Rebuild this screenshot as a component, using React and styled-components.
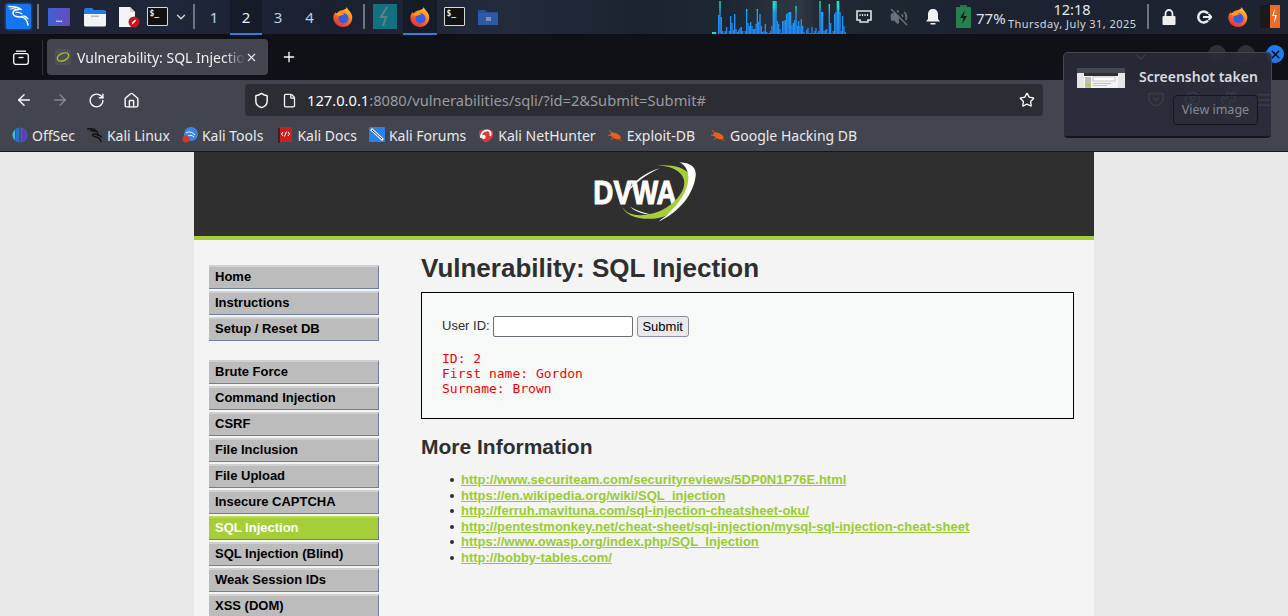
import React from 'react';
import styled, { createGlobalStyle } from 'styled-components';
import {
  ArrowLeft,
  ArrowRight,
  RotateCw,
  House,
  Shield,
  File,
  Star,
  Plus,
  X,
  ChevronDown,
  VolumeOff,
  CircleUser,
  Puzzle,
  Menu,
} from 'lucide-react';

const GlobalStyle = createGlobalStyle`
  html, body {
    margin: 0;
    padding: 0;
    background: #e8e8e8;
  }
`;

const Screen = styled.div`
  position: relative;
  width: 1288px;
  height: 616px;
  overflow: hidden;
  display: flex;
  flex-direction: column;
  font-family: 'Noto Sans', sans-serif;
`;

/* desktop panel */
const Panel = styled.div`
  flex: 0 0 35px;
  display: flex;
  align-items: stretch;
  background: linear-gradient(
    90deg,
    #1d2232 0,
    #20263a 170px,
    #1a2030 330px,
    #232a3b 500px,
    #1c2330 640px,
    #1d2734 730px,
    #2f3742 800px,
    #1f2833 820px,
    #1c2230 1000px,
    #1e2330 1288px
  );
  box-shadow: inset 0 -1px 0 #0e1016;
  color: #dfe3ea;
`;

const Slot = styled.div`
  width: ${p => p.$w}px;
  display: flex;
  align-items: center;
  justify-content: center;
  flex: none;
  margin-left: ${p => p.$ml || 0}px;
  box-shadow: ${p => (p.$active ? 'inset 0 -2px 0 #2f7fe0' : 'none')};
  background: ${p => (p.$active ? '#161b28' : 'transparent')};
  padding-bottom: 2px;
  box-sizing: border-box;
`;

const Divider = styled.div`
  width: 2px;
  height: 25px;
  align-self: center;
  margin: 0 0 2px ${p => p.$ml || 0}px;
  background: #6f7480;
  flex: none;
`;

const Workspace = styled(Slot)`
  font-size: 15px;
  color: ${p => (p.$active ? '#e8ecf2' : '#b8d0ec')};
`;

const Terminal = styled.div`
  width: 21px;
  height: 19px;
  box-sizing: border-box;
  border: 1px solid #d8d8d8;
  border-radius: 1px;
  background: #111;
  color: #eee;
  font: bold 8px/11px 'DejaVu Sans Mono', monospace;
  padding-left: 2px;
`;

const LauncherTile = styled.div`
  width: 22px;
  height: 18px;
  border-radius: 1px;
  background: linear-gradient(100deg, #3d62d8, #6a4bb8);
  color: #fff;
  font: bold 8px/22px 'Noto Sans', sans-serif;
  text-align: center;
`;

const Spectrum = styled.svg`
  display: block;
  flex: none;
  margin-left: 201px;
`;

const StatusArea = styled.div`
  margin-left: auto;
  padding-right: 8px;
  display: flex;
  align-items: center;
`;

const Percent = styled.span`
  font-size: 15px;
  color: #dfe3ea;
  width: 32px;
  margin-left: 5px;
  flex: none;
  white-space: nowrap;
`;

const Clock = styled.div`
  width: 128px;
  flex: none;
  margin-bottom: 4px;
  text-align: center;
  line-height: 1;
  white-space: nowrap;
`;

const ClockTime = styled.div`
  font-size: 14.5px;
  line-height: 17px;
  color: #e6e8ec;
`;

const ClockDate = styled.div`
  font-size: 11px;
  line-height: 12px;
  letter-spacing: 0.45px;
  color: #d4d7dd;
`;

/* browser chrome */
const TabStrip = styled.div`
  flex: 0 0 45px;
  box-sizing: border-box;
  padding: 0 4px 1px 0;
  display: flex;
  align-items: center;
  background: #0f1116;
  color: #fbfbfe;
`;

const ViewButton = styled.div`
  width: 42px;
  display: flex;
  justify-content: center;
  flex: none;
`;

const TabDivider = styled.div`
  width: 1px;
  height: 35px;
  background: #33353c;
  flex: none;
`;

const Tab = styled.div`
  width: 221px;
  height: 36px;
  margin-left: 4px;
  border-radius: 4px;
  background: #42454d;
  display: flex;
  align-items: center;
  padding: 0 10px 0 8px;
  box-sizing: border-box;
  flex: none;
`;

const TabTitle = styled.span`
  flex: 1;
  margin-left: 6px;
  font-size: 14px;
  white-space: nowrap;
  overflow: hidden;
  color: #f0f0f3;
  -webkit-mask-image: linear-gradient(90deg, #000 88%, transparent);
  mask-image: linear-gradient(90deg, #000 88%, transparent);
`;

const NewTab = styled.div`
  margin-left: 13px;
  display: flex;
`;

const TabListButton = styled.div`
  margin-left: auto;
  width: 18px;
  display: flex;
  justify-content: center;
  color: #fbfbfe;
`;

const WindowButtons = styled.div`
  margin-left: 58px;
  display: flex;
  gap: 11px;
  margin-top: -6px;
`;

const WindowButton = styled.div`
  width: 18px;
  height: 18px;
  border-radius: 50%;
  background: ${p => (p.$close ? '#1f7bf2' : '#2f3138')};
  color: #0b0d12;
  display: flex;
  align-items: center;
  justify-content: center;
`;

const Toolbar = styled.div`
  flex: 0 0 40px;
  display: flex;
  align-items: center;
  background: #42454d;
  color: #fbfbfe;
`;

const NavButton = styled.div`
  width: ${p => p.$w || 36}px;
  display: flex;
  justify-content: center;
  flex: none;
  color: ${p => (p.$off ? '#85878d' : '#fbfbfe')};
`;

const UrlBar = styled.div`
  width: 798px;
  height: 32px;
  margin-left: 103px;
  background: #2b2d33;
  border-radius: 4px;
  display: flex;
  align-items: center;
  padding: 0 8px;
  box-sizing: border-box;
  flex: none;
`;

const PageIcon = styled(File)`
  margin-left: 12px;
  flex: none;
`;

const Url = styled.span`
  margin-left: 10px;
  font-size: 14.7px;
  color: #fbfbfe;
  flex: 1;
  white-space: nowrap;
`;

const UrlRest = styled.span`
  color: #9a9ba1;
`;

const ExtraButtons = styled.div`
  margin-left: 95px;
  display: flex;
`;

const Bookmarks = styled.div`
  flex: 0 0 32px;
  display: flex;
  align-items: center;
  background: #42454d;
  padding: 0 0 1px 12px;
  box-sizing: border-box;
  border-bottom: 1px solid #17181c;
  gap: 12px;
  color: #e9e9ec;
  font-size: 14px;
`;

const Bookmark = styled.div`
  display: flex;
  align-items: center;
  gap: 4px;
  white-space: nowrap;
  margin-right: ${p => p.$trail || 0}px;
`;

/* toast over the browser */
const Toast = styled.div`
  position: absolute;
  left: 1063px;
  top: 52px;
  width: 209px;
  height: 86px;
  box-sizing: border-box;
  border: 1px solid #434752;
  border-bottom: 2px solid #14161c;
  border-radius: 5px;
  background: rgba(40, 43, 55, 0.92);
  color: #d7dae0;
`;

const ToastThumb = styled.svg`
  position: absolute;
  left: 13px;
  top: 12px;
`;

const ToastTitle = styled.div`
  position: absolute;
  left: 75px;
  top: 14px;
  font-size: 14px;
  font-weight: 600;
  white-space: nowrap;
`;

const ToastButton = styled.div`
  position: absolute;
  left: 109px;
  top: 42px;
  width: 85px;
  height: 30px;
  box-sizing: border-box;
  border: 1px solid #15171d;
  border-radius: 4px;
  background: rgba(42, 45, 57, 0.35);
  color: #868a93;
  font-size: 12.5px;
  line-height: 28px;
  text-align: center;
`;

/* the DVWA page */
const Viewport = styled.div`
  flex: 1;
  min-height: 0;
  background: #e8e8e8;
  font-family: 'Liberation Sans', Arial, sans-serif;
`;

const Container = styled.div`
  width: 900px;
  margin-left: 194px;
  height: 100%;
  background: #f4f4f4;
  color: #2f2f2f;
`;

const Header = styled.div`
  height: 84px;
  background: #2f2f2f;
  border-bottom: 4px solid #a6ce39;
  display: flex;
  justify-content: center;
  align-items: flex-start;
`;

const Logo = styled.svg`
  display: block;
  margin: 8px 0 0 2px;
`;

const Body = styled.div`
  display: flex;
  padding: 25px 20px 0 15px;
`;

const Sidebar = styled.div`
  width: 170px;
  flex: none;
`;

const MenuGroup = styled.div`
  display: flex;
  flex-direction: column;
  gap: 2px;
  margin-bottom: 19px;
`;

const MenuItem = styled.div`
  height: 24px;
  box-sizing: border-box;
  padding-left: 6px;
  font-size: 13px;
  font-weight: bold;
  line-height: 20px;
  color: ${p => (p.$active ? '#fff' : '#000')};
  background: ${p => (p.$active ? '#a6ce39' : '#bcbcbc')};
  border-top: 2px solid ${p => (p.$active ? '#bcdc55' : '#d0d0d0')};
  border-right: 1px solid #6f7f99;
  border-bottom: 1px solid #6f7f99;
`;

const Main = styled.div`
  flex: 1;
  margin-left: 42px;
`;

const Title = styled.h1`
  margin: -14px 0 6px;
  font-size: 26px;
  line-height: 35px;
  font-weight: bold;
  color: #2f2f2f;
`;

const VulnBox = styled.div`
  height: 127px;
  box-sizing: border-box;
  border: 1px solid #000;
  background: #f8f9f9;
  padding: 23px 20px 0;
`;

const FormRow = styled.div`
  display: flex;
  align-items: center;
  font-size: 13px;
  color: #2f2f2f;
`;

const FieldLabel = styled.span`
  margin-bottom: 2px;
`;

const TextInput = styled.div`
  width: 140px;
  height: 21px;
  box-sizing: border-box;
  margin-left: 3px;
  background: #fff;
  border: 1px solid #6d6d76;
  border-radius: 2px;
`;

const SubmitButton = styled.div`
  width: 52px;
  height: 21px;
  box-sizing: border-box;
  margin-left: 4px;
  background: #e9e9ed;
  border: 1px solid #8f8f9d;
  border-radius: 3px;
  color: #000;
  font-size: 13px;
  line-height: 19px;
  text-align: center;
`;

const Result = styled.pre`
  margin: 14px 0 0;
  color: #f00;
  font: 13px/15px 'DejaVu Sans Mono', monospace;
`;

const SubTitle = styled.h2`
  margin: 15px 0 12px;
  font-size: 21px;
  line-height: 26px;
  font-weight: bold;
  color: #2f2f2f;
`;

const Links = styled.ul`
  margin: 0;
  padding-left: 40px;
  font-size: 13px;
  line-height: 15.6px;
  list-style: none;
`;

const LinkItem = styled.li`
  position: relative;
  color: #2f2f2f;

  &::before {
    content: '';
    position: absolute;
    left: -11px;
    top: 6px;
    width: 4px;
    height: 4px;
    border-radius: 50%;
    background: #2f2f2f;
  }
`;

const MoreLink = styled.a`
  color: #9c3;
  font-weight: bold;
  text-decoration: underline;
`;

const FirefoxIcon = ({ size = 22 }) => (
  <svg width={size} height={size} viewBox="0 0 24 24">
    <defs>
      <linearGradient id="foxOuter" x1="0.8" y1="0" x2="0.2" y2="1">
        <stop offset="0" stopColor="#ffd23a" />
        <stop offset="0.45" stopColor="#ff7a1f" />
        <stop offset="1" stopColor="#e8263c" />
      </linearGradient>
    </defs>
    <path
      d="M16 1c1 3 5 5 6 10 1 7-4 12-10 12S1 18 1.500 11.500C2 9 3 7.500 4 6.500c0 1 .4 1.800 1 2.300C6 6 9 4.500 11.500 4.500 13.500 4 16 3 16 1z"
      fill="url(#foxOuter)"
    />
    <circle cx="12.500" cy="13.500" r="5.500" fill="#3a5de0" />
    <path d="M3.500 9c3-2.500 8-2.500 10 .5-2 0-3.500 .5-4.500 1.500-2-.5-4-1-5.500-2z" fill="#ff9a1f" />
  </svg>
);

const KaliDragon = ({ size = 16, color = '#fff', width = 1.6 }) => (
  <svg width={size} height={size} viewBox="0 0 24 24" fill="none" stroke={color} strokeWidth={width} strokeLinecap="round" strokeLinejoin="round">
    <path d="M1 3c5-1 10 0 13 3 2 2 3 4 2 6-3-2-7-2-8 0 0 2 3 2 6 3 4 1 6 3 7 7" />
    <path d="M16 12c2 0 4 1 6 3M5 5c3 0 5 1 7 2" />
  </svg>
);

const KaliTile = () => (
  <svg width="29" height="29" viewBox="-2 -2 29 29">
    <rect x="-1.500" y="-1.500" width="28" height="28" rx="4" fill="#1f7ef5" opacity="0.3" />
    <rect x="0" y="0" width="25" height="25" rx="2" fill="#1674f0" />
    <path
      d="M3 2.500C8 2.500 12 3 15.500 5.500C11 5 7 6 7 9C7 12 11 13 15 13C19 13 21 16 22 21"
      fill="none"
      stroke="#fff"
      strokeWidth="1.500"
      strokeLinecap="round"
      strokeLinejoin="round"
    />
    <path d="M4 5C7 4.500 10 5 12 6M15 13C17 11 20 12 22 15M10 8.500c2-.5 4 0 6 1.500" fill="none" stroke="#fff" strokeWidth="1.100" strokeLinecap="round" />
  </svg>
);

const FolderTile = () => (
  <svg width="22" height="20" viewBox="0 0 22 20">
    <path d="M0 3a2 2 0 0 1 2-2h6l2 2h10a2 2 0 0 1 2 2v2H0z" fill="#2a78e4" />
    <path d="M0 7h22v11a1.500 1.500 0 0 1-1.500 1.500h-19A1.500 1.500 0 0 1 0 18z" fill="#f2f3f5" />
    <rect x="7" y="8.500" width="8" height="1.600" fill="#b9bcc2" />
  </svg>
);

const DocTile = () => (
  <svg width="22" height="22" viewBox="0 0 22 22">
    <path d="M1 1h11l5 5v15H1z" fill="#f4f4f4" />
    <path d="M12 1l5 5h-5z" fill="#cfcfcf" />
    <circle cx="16" cy="16" r="5.500" fill="#c8141c" />
    <path d="M13.500 18.500l1-2.500 2.500-2.500 1.200 1.200-2.500 2.500z" fill="#fff" />
  </svg>
);

const AppFolder = () => (
  <svg width="22" height="18" viewBox="0 0 22 18">
    <path d="M1 2h7l2 2h11v13H1z" fill="#234d96" />
    <rect x="1" y="5" width="20" height="12" fill="#2a5aa8" />
    <rect x="9" y="9" width="5" height="4" fill="#7f92b4" />
  </svg>
);

const PowerTile = () => (
  <svg width="24" height="25" viewBox="0 0 24 25">
    <rect width="24" height="25" fill="#12707f" />
    <path d="M14 3L8 13h5l-3 9" fill="none" stroke="#5d7f86" strokeWidth="2.200" />
  </svg>
);

// bar heights, one every 1.33px from x = 12 inside the svg
const spectrumData = [
  19, 33, 17, 3, 1, 3, 7, 0, 3, 18, 11, 4, 20, 5, 2, 4, 6, 7, 3, 0, 3, 25, 11, 8, 12, 8, 5, 5, 10, 25, 12, 20, 8, 2, 3, 10, 2, 1, 1,
  3, 8, 33, 33, 33, 13, 10, 5, 1, 13, 13, 14, 20, 21, 22, 22, 9, 11, 14, 28, 8, 13, 8, 15, 8, 2, 0, 4, 6, 1, 1, 7, 1, 3, 6, 1, 3, 33,
  22, 22, 3, 4, 5, 1, 30, 11, 1, 3, 20, 22, 33, 33, 22, 3, 18, 8, 2,
];

const SpectrumBars = () => (
  <Spectrum width="140" height="34" viewBox="0 0 140 34">
    <defs>
      <linearGradient id="specFill" gradientUnits="userSpaceOnUse" x1="0" y1="0" x2="0" y2="34">
        <stop offset="0" stopColor="#14e8c8" />
        <stop offset="0.22" stopColor="#16dcd0" />
        <stop offset="0.38" stopColor="#1c9cf0" />
        <stop offset="1" stopColor="#2284f4" />
      </linearGradient>
    </defs>
    <rect x="6" y="32" width="4" height="2" fill="#1de0c0" />
    {spectrumData.map((h, i) => (
      <rect key={i} x={12 + i * 1.333} y={34 - h} width="1.340" height={h} fill="url(#specFill)" />
    ))}
  </Spectrum>
);

const NetworkIcon = () => (
  <svg width="16" height="14" viewBox="0 0 16 14">
    <path d="M1 1h14v9h-3v2H4v-2H1z" fill="none" stroke="#e4e4e4" strokeWidth="1.600" />
    <path d="M4 4v2M6.500 4v2M9 4v2M11.500 4v2" stroke="#e4e4e4" strokeWidth="1.200" />
  </svg>
);

const BellIcon = () => (
  <svg width="14" height="16" viewBox="0 0 14 16">
    <path d="M7 0c3 0 5 2 5 5.500V10l2 2.500H0L2 10V5.500C2 2 4 0 7 0z" fill="#f0f0f0" />
    <rect x="4.500" y="14" width="5" height="1.500" fill="#f0f0f0" />
  </svg>
);

const BatteryIcon = () => (
  <svg width="15" height="23" viewBox="0 0 15 23">
    <rect x="4" y="0" width="7" height="2" fill="#27714a" />
    <rect x="0" y="2" width="15" height="21" rx="1" fill="#27814f" />
    <path d="M9 5L4 13h3.500l-1.500 6 5-8H7.500z" fill="#10161c" />
  </svg>
);

const LockIcon = () => (
  <svg width="14" height="16" viewBox="0 0 14 16">
    <path d="M3.500 7V4.500a3.500 3.500 0 0 1 7 0V7" fill="none" stroke="#eee" strokeWidth="1.800" />
    <rect x="0.500" y="7" width="13" height="9" rx="1" fill="#eee" />
  </svg>
);

const LogoutIcon = () => (
  <svg width="15" height="14" viewBox="0 0 15 14">
    <path d="M11 3.500A5.500 5.500 0 1 0 11 10.500" fill="none" stroke="#eee" strokeWidth="2.400" />
    <path d="M6 7h9M11.500 4l3 3-3 3" fill="none" stroke="#eee" strokeWidth="1.800" />
  </svg>
);

const BurpIcon = () => (
  <svg width="20" height="23" viewBox="0 0 20 23">
    <rect width="10" height="23" fill="#1a1a1a" />
    <rect x="10" width="10" height="23" fill="#f06a22" />
    <path d="M15 3l-3 8h3l-1 8 3-9h-3z" fill="#fff" />
  </svg>
);

const ShelfIcon = () => (
  <svg width="16" height="15" viewBox="0 0 16 15" fill="none" stroke="#fbfbfe" strokeWidth="1.300">
    <path d="M3 1.200h10" />
    <rect x="0.700" y="3.700" width="14.600" height="10.600" rx="2" />
    <path d="M5.500 7.500h5" />
  </svg>
);

const PocketIcon = () => (
  <svg width="16" height="16" viewBox="0 0 16 16" fill="none" stroke="#fbfbfe" strokeWidth="1.300">
    <path d="M1 2.500h14v5a7 7 0 0 1-14 0z" strokeLinejoin="round" />
    <path d="M5 6.500l3 3 3-3" />
  </svg>
);

const Favicon = () => (
  <svg width="16" height="16" viewBox="0 0 16 16">
    <rect width="16" height="16" rx="2" fill="#4d5055" />
    <ellipse cx="8" cy="8" rx="6" ry="3.600" transform="rotate(-25 8 8)" fill="none" stroke="#a6c23a" strokeWidth="1.400" />
  </svg>
);

const OffSecIcon = () => (
  <svg width="16" height="16" viewBox="0 0 16 16">
    <circle cx="8" cy="8" r="7.500" fill="#2b6fd0" />
    <path d="M3 3v10M8 .500v15" stroke="#42454d" strokeWidth="1.200" />
    <path d="M10 1v14a7.500 7.500 0 0 0 0-14z" fill="#5a3fb8" />
    <path d="M0.500 8a7.500 7.500 0 0 1 2.500-5.500v11A7.500 7.500 0 0 1 .500 8z" fill="#40c0d8" />
  </svg>
);

const KaliToolsIcon = () => (
  <svg width="16" height="16" viewBox="0 0 16 16">
    <circle cx="9" cy="7" r="7" fill="#3a86e8" />
    <path d="M4 6c3-2 6-1 9 2M6 9c2-1 4-1 6 1" fill="none" stroke="#fff" strokeWidth="1" />
    <circle cx="4" cy="12" r="3.500" fill="#d8352b" />
  </svg>
);

const KaliDocsIcon = () => (
  <svg width="16" height="18" viewBox="0 0 16 18">
    <rect x="2" y="1" width="13" height="15" fill="#c8201f" />
    <rect x="1" y="2" width="2" height="15" fill="#3a2420" />
    <path d="M6 6L4.500 8 6 10M11 6l1.500 2L11 10M9.500 5.500L7.500 10.500" fill="none" stroke="#fff" strokeWidth="1" />
  </svg>
);

const KaliForumsIcon = () => (
  <svg width="16" height="16" viewBox="0 0 16 16">
    <rect width="16" height="15" rx="1" fill="#2a80ec" />
    <path d="M2 2l12 11" stroke="#fff" strokeWidth="3" />
    <path d="M3 3l10 9" stroke="#28323c" strokeWidth="1" />
  </svg>
);

const NetHunterIcon = () => (
  <svg width="16" height="17" viewBox="0 0 17 17">
    <path d="M1 4c4-3 10-3 15 0v5c-2 4-5 6-8 7-3-2-6-4-7-8z" fill="#d83a3a" />
    <path d="M3 11c0-5 3-8 7-8 3 0 4 3 3 6" fill="none" stroke="#fff" strokeWidth="2" />
    <circle cx="6" cy="10" r="2.200" fill="#fff" />
  </svg>
);

const ExploitIcon = () => (
  <svg width="15" height="14" viewBox="0 0 16 14">
    <ellipse cx="8" cy="8" rx="6" ry="3" transform="rotate(25 8 8)" fill="#e8601c" />
    <path d="M1 2l5 4M0 7l5 1M3 12l4-3M12 12l2 1" stroke="#e8601c" strokeWidth="1" />
  </svg>
);

const ThumbIcon = () => (
  <ToastThumb width="48" height="23" viewBox="0 0 48 23">
    <rect width="48" height="23" fill="#e6e6e6" />
    <rect width="48" height="3" fill="#23283a" />
    <rect y="3" width="48" height="5" fill="#44474e" />
    <rect x="7" y="8" width="34" height="15" fill="#f4f4f4" />
    <rect x="7" y="8" width="34" height="3" fill="#2f2f2f" />
    <rect x="8" y="12" width="6" height="11" fill="#bcbcbc" />
    <rect x="8" y="19" width="6" height="1.500" fill="#a6ce39" />
    <rect x="16" y="12" width="22" height="4" fill="#fff" stroke="#777" strokeWidth="0.400" />
    <rect x="16" y="18" width="18" height="1" fill="#b8d860" />
    <rect x="16" y="20" width="14" height="1" fill="#b8d860" />
  </ToastThumb>
);

const DvwaLogo = () => (
  <Logo width="110" height="63.300" viewBox="90 30 330 190">
    <path d="M300 55C260 65 215 95 198 135 220 100 265 70 300 55Z" fill="#fff" />
    <path d="M210 170C225 185 255 195 285 195 255 190 230 182 210 170Z" fill="#fff" />
    <text
      x="100"
      y="161"
      fontFamily="'Liberation Sans', Arial, sans-serif"
      fontWeight="bold"
      fontSize="100"
      textLength="250"
      lengthAdjust="spacingAndGlyphs"
      fill="#fff"
      stroke="#fff"
      strokeWidth="3"
    >
      DVWA
    </text>
    <path
      d="M185 165C195 205 260 215 310 200 370 180 415 115 390 75 375 50 330 42 285 47 325 45 365 60 372 90 380 125 335 175 280 190 235 202 195 195 185 165Z"
      fill="#a6ce39"
    />
    <path d="M358 37C395 38 415 55 405 90 395 140 345 195 295 215 340 185 385 130 385 85 385 60 375 45 358 37Z" fill="#fff" />
  </Logo>
);

const bookmarks = [
  { name: 'OffSec', icon: <OffSecIcon /> },
  { name: 'Kali Linux', icon: <KaliDragon size={16} color="#111" width={2} /> },
  { name: 'Kali Tools', icon: <KaliToolsIcon />, trail: 2 },
  { name: 'Kali Docs', icon: <KaliDocsIcon /> },
  { name: 'Kali Forums', icon: <KaliForumsIcon /> },
  { name: 'Kali NetHunter', icon: <NetHunterIcon /> },
  { name: 'Exploit-DB', icon: <ExploitIcon />, trail: 4 },
  { name: 'Google Hacking DB', icon: <ExploitIcon /> },
];

const menuGroups = [
  ['Home', 'Instructions', 'Setup / Reset DB'],
  [
    'Brute Force',
    'Command Injection',
    'CSRF',
    'File Inclusion',
    'File Upload',
    'Insecure CAPTCHA',
    'SQL Injection',
    'SQL Injection (Blind)',
    'Weak Session IDs',
    'XSS (DOM)',
  ],
];

const moreLinks = [
  'http://www.securiteam.com/securityreviews/5DP0N1P76E.html',
  'https://en.wikipedia.org/wiki/SQL_injection',
  'http://ferruh.mavituna.com/sql-injection-cheatsheet-oku/',
  'http://pentestmonkey.net/cheat-sheet/sql-injection/mysql-sql-injection-cheat-sheet',
  'https://www.owasp.org/index.php/SQL_Injection',
  'http://bobby-tables.com/',
];

export default function App() {
  return (
    <Screen>
      <GlobalStyle />
      <Panel>
        <Slot $w={37}>
          <KaliTile />
        </Slot>
        <Divider />
        <Slot $w={38} $ml={1}>
          <LauncherTile>...</LauncherTile>
        </Slot>
        <Slot $w={33}>
          <FolderTile />
        </Slot>
        <Slot $w={35}>
          <DocTile />
        </Slot>
        <Slot $w={22}>
          <Terminal>$_</Terminal>
        </Slot>
        <Slot $w={25}>
          <ChevronDown size={14} color="#d8d8d8" strokeWidth={2.4} />
        </Slot>
        <Divider />
        <Workspace $w={32} $ml={3}>1</Workspace>
        <Workspace $w={32} $active>2</Workspace>
        <Workspace $w={32}>3</Workspace>
        <Workspace $w={31}>4</Workspace>
        <Slot $w={36}>
          <FirefoxIcon />
        </Slot>
        <Divider $ml={2} />
        <Slot $w={37} $ml={1}>
          <PowerTile />
        </Slot>
        <Slot $w={34} $active>
          <FirefoxIcon />
        </Slot>
        <Slot $w={34}>
          <Terminal>$_</Terminal>
        </Slot>
        <Slot $w={34}>
          <AppFolder />
        </Slot>
        <SpectrumBars />
        <StatusArea>
          <Slot $w={35}>
            <NetworkIcon />
          </Slot>
          <Slot $w={35}>
            <VolumeOff size={18} color="#6e7078" fill="#6e7078" />
          </Slot>
          <Slot $w={34}>
            <BellIcon />
          </Slot>
          <Slot $w={15} $ml={6}>
            <BatteryIcon />
          </Slot>
          <Percent>77%</Percent>
          <Clock>
            <ClockTime>12:18</ClockTime>
            <ClockDate>Thursday, July 31, 2025</ClockDate>
          </Clock>
          <Divider $ml={11} />
          <Slot $w={28} $ml={6}>
            <LockIcon />
          </Slot>
          <Slot $w={35} $ml={4}>
            <LogoutIcon />
          </Slot>
          <Slot $w={30} $ml={1}>
            <FirefoxIcon />
          </Slot>
          <Slot $w={20} $ml={7}>
            <BurpIcon />
          </Slot>
        </StatusArea>
      </Panel>

      <TabStrip>
        <ViewButton>
          <ShelfIcon />
        </ViewButton>
        <TabDivider />
        <Tab>
          <Favicon />
          <TabTitle>Vulnerability: SQL Injection</TabTitle>
          <X size={13} color="#e8e8ea" />
        </Tab>
        <NewTab>
          <Plus size={16} />
        </NewTab>
        <TabListButton>
          <ChevronDown size={16} />
        </TabListButton>
        <WindowButtons>
          <WindowButton />
          <WindowButton />
          <WindowButton $close>
            <X size={13} strokeWidth={3} />
          </WindowButton>
        </WindowButtons>
      </TabStrip>

      <Toolbar>
        <NavButton $w={48}>
          <ArrowLeft size={18} />
        </NavButton>
        <NavButton $w={24} $off>
          <ArrowRight size={18} />
        </NavButton>
        <NavButton $w={48}>
          <RotateCw size={17} />
        </NavButton>
        <NavButton $w={22}>
          <House size={17} />
        </NavButton>
        <UrlBar>
          <Shield size={17} />
          <PageIcon size={15} />
          <Url>
            127.0.0.1<UrlRest>:8080/vulnerabilities/sqli/?id=2&amp;Submit=Submit#</UrlRest>
          </Url>
          <Star size={16} />
        </UrlBar>
        <ExtraButtons>
          <NavButton>
            <PocketIcon />
          </NavButton>
          <NavButton>
            <CircleUser size={17} />
          </NavButton>
          <NavButton>
            <Puzzle size={17} />
          </NavButton>
          <NavButton>
            <Menu size={18} />
          </NavButton>
        </ExtraButtons>
      </Toolbar>

      <Bookmarks>
        {bookmarks.map(b => (
          <Bookmark key={b.name} $trail={b.trail}>
            {b.icon}
            {b.name}
          </Bookmark>
        ))}
      </Bookmarks>

      <Viewport>
        <Container>
          <Header>
            <DvwaLogo />
          </Header>
          <Body>
            <Sidebar>
              {menuGroups.map((group, i) => (
                <MenuGroup key={i}>
                  {group.map(label => (
                    <MenuItem key={label} $active={label === 'SQL Injection'}>
                      {label}
                    </MenuItem>
                  ))}
                </MenuGroup>
              ))}
            </Sidebar>
            <Main>
              <Title>Vulnerability: SQL Injection</Title>
              <VulnBox>
                <FormRow>
                  <FieldLabel>User ID:</FieldLabel>
                  <TextInput />
                  <SubmitButton>Submit</SubmitButton>
                </FormRow>
                <Result>{'ID: 2\nFirst name: Gordon\nSurname: Brown'}</Result>
              </VulnBox>
              <SubTitle>More Information</SubTitle>
              <Links>
                {moreLinks.map(href => (
                  <LinkItem key={href}>
                    <MoreLink href={href}>{href}</MoreLink>
                  </LinkItem>
                ))}
              </Links>
            </Main>
          </Body>
        </Container>
      </Viewport>

      <Toast>
        <ThumbIcon />
        <ToastTitle>Screenshot taken</ToastTitle>
        <ToastButton>View image</ToastButton>
      </Toast>
    </Screen>
  );
}
